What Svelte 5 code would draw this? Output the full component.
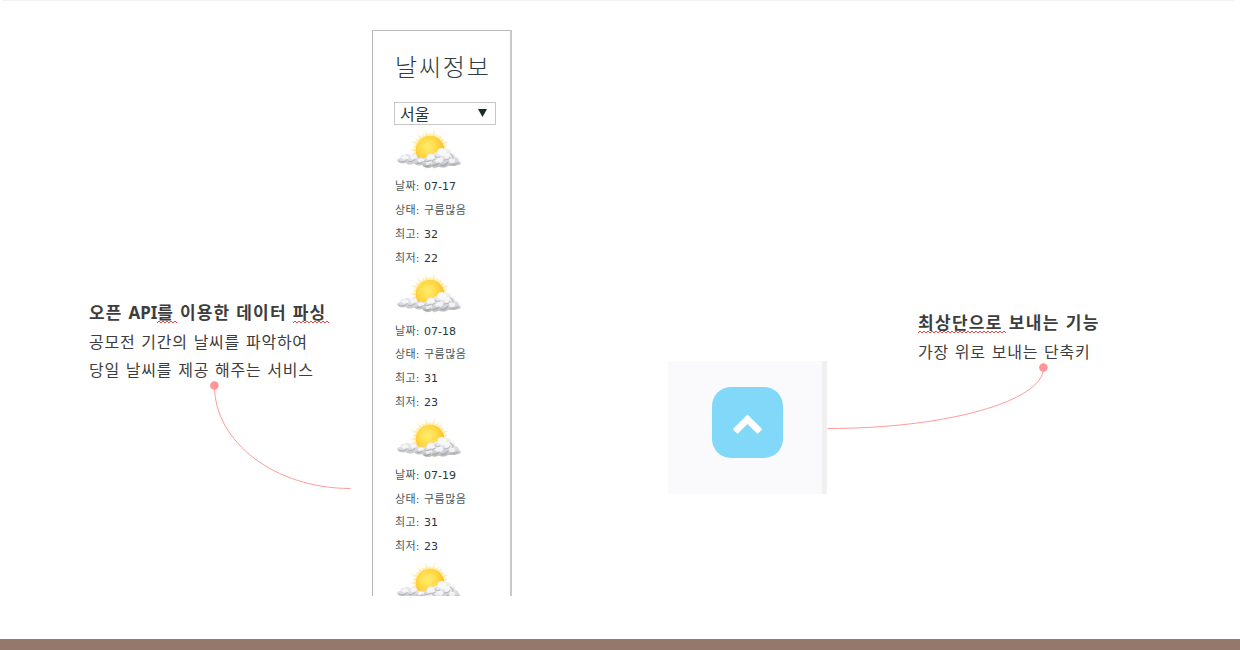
<script>
  const days = [
    { date: '07-17', sky: '구름많음', high: '32', low: '22' },
    { date: '07-18', sky: '구름많음', high: '31', low: '23' },
    { date: '07-19', sky: '구름많음', high: '31', low: '23' }
  ];

  const rays = Array.from({ length: 28 }, (_, i) => {
    const a = (i * Math.PI) / 14;
    const r = i % 2 ? 18.5 : 21.5;
    const p = (rad, ang) => `${(36 + rad * Math.cos(ang)).toFixed(2)},${(25 + rad * Math.sin(ang)).toFixed(2)}`;
    return `${p(13, a - 0.09)} ${p(r, a)} ${p(13, a + 0.09)}`;
  });

  const zigzag = (w) => {
    let d = 'M0 3';
    for (let x = 2, up = true; x <= w; x += 2, up = !up) d += `L${x} ${up ? 1 : 3}`;
    return d;
  };
</script>

{#snippet squiggle(width)}
  <svg class="squiggle" {width} height="4" viewBox="0 0 {width} 4" aria-hidden="true"><path d={zigzag(width)} /></svg>
{/snippet}

{#snippet weather()}
  <svg class="weather" width="70" height="45" viewBox="0 0 70 45" aria-hidden="true">
    {#each rays as points}<polygon {points} fill="#ffda62" opacity="0.55" />{/each}
    <circle cx="36" cy="25" r="16.500" fill="#ffe98c" opacity="0.45" />
    <circle cx="36" cy="25" r="14.300" fill="url(#sun)" />
    <path fill="url(#cloud)" d="M3 35.500C3 33.500 5 33 6.500 33C6 30.500 8.500 29 10.500 30C12.500 28.300 15.500 28.500 16.500 30.500C17.500 28.500 21.500 28 22.500 30.500C24 32 24 32.500 23.500 33.500C25.500 32 28.500 32 30 33.500C31 32 32 32 33 32C33 29 36 27 39 29C40 27.500 42 27 43 27.500C43 23 48 21.500 51 24.500C54 23 57 25 57 28C60 28 61 30 61 32C64 32 65 34 65 36C68 37.500 67 40 64 40C61 41.500 56 41 54 41C51 43 47 43 45 41.500C42 43 40 43 38 42C34 44 29 42.500 28.500 40C25 41 22 40.500 20 38.500C17 40 14 40 12 38C8 39 4 38 3 35.500Z" />
    <g fill="#fff" opacity="0.7">
      <ellipse cx="11" cy="32.500" rx="3.500" ry="2" />
      <ellipse cx="19.500" cy="32" rx="3" ry="2.200" />
      <ellipse cx="27" cy="35.500" rx="3" ry="2" />
      <ellipse cx="37" cy="32.500" rx="4" ry="3" />
      <ellipse cx="48" cy="27.500" rx="4.200" ry="3.500" />
      <ellipse cx="54" cy="31" rx="3.500" ry="3" />
      <ellipse cx="45" cy="35" rx="4" ry="3" />
      <ellipse cx="35" cy="38" rx="3.500" ry="2" />
      <ellipse cx="58" cy="36" rx="3" ry="2.200" />
    </g>
    <g fill="none" stroke="#7d828e" stroke-width="1.200" opacity="0.42" stroke-linecap="round">
      <path d="M5 36c3 1.500 6 1 8-1.500M14 36c3 1 6 0 7-2M23 38c2 1 4 0 6-1.500M31 36c2 1 4 1 6-1M41 31c1 2 3 2 5 1M50 35c3 0 5-1 6-3M39 40c3 1 5-1 6-2M47 40c3 1 6-1 7-3M57 39c3 1 5 0 7-1M30 41c3 1 5 0 7-2M38 36c1-2 2-2 4-2M56 29c2 1 3 3 3 4" />
    </g>
  </svg>
{/snippet}

<main>
  <svg class="defs" width="0" height="0" aria-hidden="true">
    <defs>
      <radialGradient id="sun" cx="0.42" cy="0.38" r="0.65">
        <stop offset="0" stop-color="#ffee70" /><stop offset="0.55" stop-color="#ffd740" /><stop offset="1" stop-color="#fbb32a" />
      </radialGradient>
      <linearGradient id="cloud" x1="0" y1="0" x2="0" y2="1">
        <stop offset="0" stop-color="#f5f5f7" /><stop offset="0.6" stop-color="#dcdde1" /><stop offset="1" stop-color="#b4b5bb" />
      </linearGradient>
    </defs>
  </svg>

  <section class="note left">
    <h2>오픈 <span class="latin">API</span><span class="marked">를{@render squiggle(20)}</span> 이용한 데이터 <span class="marked">파싱{@render squiggle(36)}</span></h2>
    <p>공모전 기간의 날씨를 파악하여</p>
    <p>당일 날씨를 제공 해주는 서비스</p>
  </section>

  <section class="panel">
    <h1>날씨정보</h1>
    <div class="select"><span>서울</span><svg width="9" height="8" viewBox="0 0 9 8"><path d="M0 0h9L4.5 8z" fill="#172a2c" /></svg></div>
    {#each days as day}
      <article>
        {@render weather()}
        <div class="row"><b>날짜:</b>{day.date}</div>
        <div class="row"><b>상태:</b><b class="sky">{day.sky}</b></div>
        <div class="row"><b>최고:</b>{day.high}</div>
        <div class="row"><b>최저:</b>{day.low}</div>
      </article>
    {/each}
    <article>{@render weather()}</article>
  </section>

  <section class="shortcut">
    <div class="top-button">
      <svg width="31" height="24" viewBox="0 0 31 24"><path d="M15.500 4.900L2.140 18.240L5.460 21.560L15.500 11.600L25.540 21.560L28.860 18.240Z" fill="#fff" stroke="#fff" stroke-width="2" stroke-linejoin="round" /></svg>
    </div>
  </section>

  <section class="note right">
    <h2><span class="marked">최상단으로{@render squiggle(88)}</span> 보내는 기능</h2>
    <p>가장 위로 보내는 단축키</p>
  </section>

  <svg class="connectors" width="1240" height="650" viewBox="0 0 1240 650" aria-hidden="true">
    <path d="M214.500 386C214.500 442 275 488.500 350.500 488.500M1043.500 368C1043.500 401 947 428.500 827.500 428.500" />
    <circle cx="214.400" cy="385.500" r="4.300" /><circle cx="1043.400" cy="367.500" r="4.300" />
  </svg>
</main>
<footer></footer>

<style>
  :global(body) { margin: 0; background: #fff; overflow: hidden; }
  main {
    position: relative;
    box-sizing: border-box;
    height: 639px;
    padding: 29px 0 0 89px;
    display: grid;
    grid-template-columns: 283px 140px 156px 159px 91px 1fr;
    align-items: start;
    font-family: "Noto Sans", "Noto Sans CJK KR", sans-serif;
    color: #3d3d3d;
  }
  main::before { content: ""; position: absolute; left: 2px; right: 5px; top: 0; height: 1px; background: #f2f2f2; }
  .defs { position: absolute; }
  footer { height: 11px; background: #93786b; }
  h1, h2, p { margin: 0; font-weight: 400; white-space: nowrap; }
  .note { grid-row: 1; }
  .left { grid-column: 1; padding-top: 269px; }
  .right { grid-column: 6; padding-top: 279px; }
  h2 { height: 30px; font-size: 17px; font-weight: 700; line-height: 30px; letter-spacing: 1.15px; word-spacing: 0.4px; }
  .latin { letter-spacing: -0.1px; }
  .right h2 { letter-spacing: 1.3px; }
  p { font-size: 16px; line-height: 28px; letter-spacing: 0.75px; word-spacing: 1px; }
  .marked { position: relative; }
  .squiggle { position: absolute; left: 0; bottom: 0; }
  .squiggle path { fill: none; stroke: #f04040; stroke-width: 1; }
  .panel {
    grid-column: 2;
    grid-row: 1;
    box-sizing: border-box;
    height: 566px;
    margin-top: 1px;
    overflow: hidden;
    border: solid;
    border-width: 1px 2px 0 1px;
    border-color: #bbb #c9c9c9 #bbb #b5b5b5;
    padding: 0 14px 0 21px;
    color: #263638;
  }
  h1 { height: 71px; line-height: 72px; font-size: 24px; font-weight: 300; letter-spacing: 1.8px; padding-left: 1px; color: #2d3d40; }
  .select {
    box-sizing: border-box;
    height: 23px;
    width: 102px;
    border: 1px solid #c8c8c8;
    display: flex;
    align-items: center;
    justify-content: space-between;
    padding: 0 8px 2px 5px;
    font-size: 16px;
  }
  article { height: 144.3px; }
  .weather { display: block; height: 45px; margin-bottom: 5.4px; }
  .row { font: 11px/23.7px "DejaVu Sans", "Noto Sans CJK KR", sans-serif; white-space: nowrap; padding-left: 1px; display: flex; }
  .row b { width: 29px; font-weight: 400; letter-spacing: 0.3px; color: #46575a; }
  .row .sky { width: auto; letter-spacing: 0.5px; }
  .shortcut {
    grid-column: 4;
    grid-row: 1;
    box-sizing: border-box;
    height: 133px;
    margin-top: 332px;
    padding: 26px 0 0 44px;
    background: #fafafc;
    border-right: 5px solid #f0f0f0;
  }
  .top-button { width: 71px; height: 71px; border-radius: 19px; background: #82d8f9; display: grid; place-items: center; }
  .connectors { position: absolute; left: 0; top: 0; pointer-events: none; }
  .connectors path { fill: none; stroke: #ff9b9b; stroke-width: 1; }
  .connectors circle { fill: #ff9595; }
</style>
